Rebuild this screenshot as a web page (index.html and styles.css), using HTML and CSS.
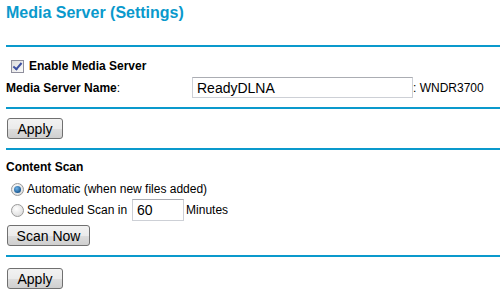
FILE: index.html
```html
<!DOCTYPE html>
<html lang="en">
<head>
    <meta charset="UTF-8">
    <title>Media Server (Settings)</title>
    <link rel="stylesheet" href="styles.css">
</head>
<body>
    <div class="page">
        <h1 class="title">Media Server (Settings)</h1>
        <div class="rule"></div>

        <div class="section top">
            <label class="check-row">
                <input type="checkbox" class="check" checked>
                <span class="bold">Enable Media Server</span>
            </label>
            <div class="name-row">
                <span class="name-label"><b>Media Server Name</b>:</span>
                <input type="text" class="text-field name-field" value="ReadyDLNA">
                <span>: WNDR3700</span>
            </div>
        </div>
        <div class="rule"></div>

        <div class="section btn-section">
            <button class="btn apply">Apply</button>
        </div>
        <div class="rule"></div>

        <div class="section scan">
            <div class="scan-title bold">Content Scan</div>
            <label class="radio-row first">
                <input type="radio" name="scan" class="radio" checked>
                <span>Automatic (when new files added)</span>
            </label>
            <div class="radio-row second">
                <input type="radio" name="scan" class="radio">
                <span>Scheduled Scan in</span>
                <input type="text" class="text-field mins" value="60">
                <span>Minutes</span>
            </div>
            <button class="btn scan-now">Scan Now</button>
        </div>
        <div class="rule"></div>

        <div class="section last">
            <button class="btn apply">Apply</button>
        </div>
    </div>
</body>
</html>
```

FILE: styles.css
```css
body {
    margin: 0;
    font-family: "Liberation Sans", Arial, sans-serif;
    font-size: 12px;
    color: #000;
    background: #fff;
}

.page {
    padding-left: 6px;
}

.title {
    margin: 0 0 22px;
    padding-top: 3px;
    font-size: 16px;
    line-height: 20px;
    color: #0a99cc;
}

.rule {
    height: 2px;
    background: #0a99cc;
}

.bold {
    font-weight: bold;
}

.section.top {
    padding: 9px 0 9px;
}

.check-row {
    display: flex;
    align-items: center;
    height: 20px;
}

.check {
    appearance: none;
    width: 13px;
    height: 13px;
    margin: 0 5px 0 5px;
    border: 1px solid #8f8f9d;
    background: linear-gradient(135deg, #dcdcdc, #fbfbfb);
    position: relative;
}

.check:checked::after {
    content: "";
    position: absolute;
    left: 3px;
    top: 0px;
    width: 3px;
    height: 7px;
    border: solid #3c4fa0;
    border-width: 0 2px 2px 0;
    transform: rotate(40deg);
}

.name-row {
    display: flex;
    align-items: center;
    margin-top: 1px;
    height: 21px;
}

.name-label {
    width: 186px;
}

.text-field {
    box-sizing: border-box;
    font-family: "Liberation Sans", Arial, sans-serif;
    font-size: 14px;
    border: 1px solid #cdd0d6;
    border-top-color: #abadb3;
    padding: 0 4px;
    margin: 0;
    color: #000;
}

.name-field {
    width: 221px;
    height: 21px;
}

.btn-section {
    padding: 9px 0;
}

.btn {
    display: block;
    height: 21px;
    padding: 0;
    font-family: "Liberation Sans", Arial, sans-serif;
    font-size: 14px;
    color: #000;
    border: 1px solid #707070;
    border-radius: 3px;
    background: linear-gradient(#f2f2f2, #ebebeb 50%, #dddddd 51%, #cfcfcf);
    margin-left: 1px;
}

.apply {
    width: 56px;
}

.scan-now {
    width: 83px;
    margin-top: 4px;
}

.section.scan {
    padding: 8px 0 9px;
}

.scan-title {
    height: 18px;
    line-height: 18px;
}

.radio-row {
    display: flex;
    align-items: center;
}

.radio-row.first {
    margin-top: 4px;
    height: 18px;
}

.radio-row.second {
    margin-top: 1px;
    height: 22px;
}

.radio {
    appearance: none;
    width: 13px;
    height: 13px;
    margin: 0 3px 0 5px;
    border: 1px solid #9a9a9a;
    border-radius: 50%;
    background: radial-gradient(circle at 40% 35%, #ffffff, #d4d4d4);
    position: relative;
}

.radio:checked::after {
    content: "";
    position: absolute;
    left: 2px;
    top: 2px;
    width: 7px;
    height: 7px;
    border-radius: 50%;
    background: radial-gradient(circle at 40% 35%, #6fb3e8, #1c5b94 70%, #0e3a66);
}

.mins {
    width: 52px;
    height: 22px;
    margin: 0 2px 0 5px;
}

.section.last {
    padding-top: 11px;
}
```
